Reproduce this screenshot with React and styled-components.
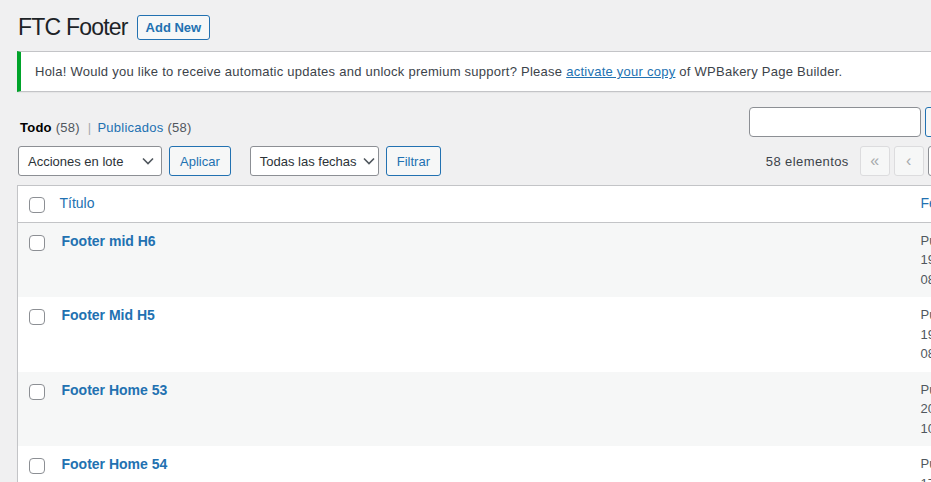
import styled, { createGlobalStyle } from "styled-components"

const GlobalStyle = createGlobalStyle`
    html, body {
        margin: 0;
        padding: 0;
        background: #f0f0f1;
        overflow: hidden;
    }
    body {
        font-family: "Liberation Sans", Arial, sans-serif;
        font-size: 13px;
        color: #3c434a;
    }
`

const rows = [
    { title: 'Footer mid H6', date: ['Publicada', '19/05/2023 a las', '08:45'] },
    { title: 'Footer Mid H5', date: ['Publicada', '19/05/2023 a las', '08:41'] },
    { title: 'Footer Home 53', date: ['Publicada', '20/04/2023 a las', '10:12'] },
    { title: 'Footer Home 54', date: ['Publicada', '17/04/2023 a las', '09:30'] },
]

function Chevron() {
    return (
        <svg width="12" height="8" viewBox="0 0 12 8">
            <polyline points="1,1.5 6,6.5 11,1.5" fill="none" stroke="#50575e" strokeWidth="1.6" />
        </svg>
    )
}

export default function App() {
    return (
        <>
            <GlobalStyle />
            <Wrap>
                <Header>
                    <Title>FTC Footer</Title>
                    <AddNew>Add New</AddNew>
                </Header>

                <Notice>
                    Hola! Would you like to receive automatic updates and unlock premium support? Please&nbsp;
                    <a href="#">activate your copy</a>&nbsp;of WPBakery Page Builder.
                </Notice>

                <SearchRow>
                    <SubSub>
                        <Current>Todo</Current> <Count>(58)</Count>
                        <Sep>|</Sep>
                        <a href="#">Publicados</a> <Count>(58)</Count>
                    </SubSub>
                    <SearchBox>
                        <SearchInput type="search" />
                        <SearchButton>Buscar entradas</SearchButton>
                    </SearchBox>
                </SearchRow>

                <TableNav>
                    <Actions>
                        <FakeSelect $width="144px">
                            <span>Acciones en lote</span>
                            <Chevron />
                        </FakeSelect>
                        <OutlineButton>Aplicar</OutlineButton>
                    </Actions>
                    <Actions>
                        <FakeSelect $width="129px">
                            <span>Todas las fechas</span>
                            <Chevron />
                        </FakeSelect>
                        <OutlineButton>Filtrar</OutlineButton>
                    </Actions>
                    <Pages>
                        <ItemCount>58 elementos</ItemCount>
                        <PageButton $disabled>«</PageButton>
                        <PageButton $disabled>‹</PageButton>
                        <CurrentPage defaultValue="1" />
                        <OfPages>de 3</OfPages>
                        <PageButton>›</PageButton>
                        <PageButton>»</PageButton>
                    </Pages>
                </TableNav>

                <ListTable>
                    <colgroup>
                        <col style={{ width: '32px' }} />
                        <col />
                        <col style={{ width: '159px' }} />
                    </colgroup>
                    <thead>
                        <tr>
                            <HeadCheck><Checkbox /></HeadCheck>
                            <HeadCell><a href="#">Título</a></HeadCell>
                            <HeadCell><a href="#">Fecha</a></HeadCell>
                        </tr>
                    </thead>
                    <tbody>
                        {rows.map((row, i) => (
                            <Row key={i} $striped={i % 2 === 0}>
                                <CheckCell><Checkbox /></CheckCell>
                                <TitleCell><a href="#">{row.title}</a></TitleCell>
                                <DateCell>
                                    {row.date[0]}<br />{row.date[1]}<br />{row.date[2]}
                                </DateCell>
                            </Row>
                        ))}
                    </tbody>
                </ListTable>
            </Wrap>
        </>
    )
}

const Wrap = styled.div`
    width: 1053px;
    margin-left: 17px;
    padding-top: 15px;
    a {
        color: #2271b1;
        text-decoration: none;
    }
`

const Header = styled.div`
    display: flex;
    align-items: center;
    height: 25px;
`

const Title = styled.h1`
    margin: 0 9px 0 1px;
    font-size: 23px;
    line-height: 25px;
    font-weight: 400;
    letter-spacing: -0.8px;
    color: #1d2327;
`

const AddNew = styled.button`
    box-sizing: border-box;
    height: 25px;
    padding: 0 8px;
    border: 1px solid #2271b1;
    border-radius: 3px;
    background: #f6f7f7;
    color: #2271b1;
    font-family: inherit;
    font-size: 13px;
    font-weight: 600;
`

const Notice = styled.div`
    box-sizing: border-box;
    display: flex;
    align-items: center;
    height: 41px;
    margin-top: 11px;
    padding-left: 14px;
    background: #fff;
    border: 1px solid #c3c4c7;
    border-left: 4px solid #00a32a;
    white-space: nowrap;
    letter-spacing: 0.25px;
    box-shadow: 0 1px 1px rgba(0, 0, 0, 0.04);
    a {
        text-decoration: underline;
    }
`

const SearchRow = styled.div`
    display: flex;
    justify-content: space-between;
    align-items: flex-start;
    margin-top: 15px;
`

const SubSub = styled.div`
    margin-top: 13px;
    padding-left: 3px;
    line-height: 16px;
    letter-spacing: 0.25px;
    color: #646970;
`

const Current = styled.span`
    font-weight: 600;
    color: #000;
`

const Count = styled.span`
    color: #50575e;
`

const Sep = styled.span`
    margin: 0 6px 0 8px;
    color: #a7aaad;
`

const SearchBox = styled.div`
    display: flex;
    gap: 4px;
`

const SearchInput = styled.input`
    box-sizing: border-box;
    width: 172px;
    height: 30px;
    border: 1px solid #8c8f94;
    border-radius: 4px;
    background: #fff;
`

const OutlineButton = styled.button`
    box-sizing: border-box;
    height: 30px;
    padding: 0 10px;
    border: 1px solid #2271b1;
    border-radius: 3px;
    background: #f6f7f7;
    color: #2271b1;
    font-family: inherit;
    font-size: 13px;
    white-space: nowrap;
`

const SearchButton = styled(OutlineButton)`
    width: 145px;
`

const TableNav = styled.div`
    display: flex;
    align-items: center;
    height: 30px;
    margin-top: 9px;
    padding-left: 1px;
`

const Actions = styled.div`
    display: flex;
    align-items: center;
    gap: 7px;
    margin-right: 19px;
`

const FakeSelect = styled.div`
    box-sizing: border-box;
    display: flex;
    align-items: center;
    justify-content: space-between;
    width: ${props => props.$width};
    height: 30px;
    padding: 0 7px 0 9px;
    border: 1px solid #8c8f94;
    border-radius: 3px;
    background: #fff;
    color: #2c3338;
    font-size: 13px;
    white-space: nowrap;
    svg {
        flex-shrink: 0;
        margin-left: 6px;
    }
`

const Pages = styled.div`
    display: flex;
    align-items: center;
    gap: 4px;
    margin-left: auto;
`

const ItemCount = styled.span`
    margin-right: 7px;
    letter-spacing: 0.4px;
`

const PageButton = styled.span`
    box-sizing: border-box;
    display: flex;
    align-items: center;
    justify-content: center;
    width: 30px;
    height: 30px;
    border: 1px solid ${props => props.$disabled ? '#dcdcde' : '#2271b1'};
    border-radius: 3px;
    background: #f6f7f7;
    color: ${props => props.$disabled ? '#a7aaad' : '#2271b1'};
    font-size: 16px;
`

const CurrentPage = styled.input`
    box-sizing: border-box;
    width: 33px;
    height: 30px;
    border: 1px solid #8c8f94;
    border-radius: 3px;
    text-align: center;
    font-family: inherit;
    font-size: 13px;
    color: #2c3338;
`

const OfPages = styled.span`
    margin: 0 6px;
`

const ListTable = styled.table`
    width: 100%;
    margin-top: 9px;
    table-layout: fixed;
    border-collapse: collapse;
    border: 1px solid #c3c4c7;
    background: #fff;
    box-shadow: 0 1px 1px rgba(0, 0, 0, 0.04);
`

const HeadCheck = styled.th`
    vertical-align: top;
    padding: 11px 0 0 11px;
    text-align: left;
    border-bottom: 1px solid #c3c4c7;
`

const HeadCell = styled.th`
    padding: 8px 10px;
    text-align: left;
    font-weight: 400;
    font-size: 14px;
    line-height: 19.6px;
    border-bottom: 1px solid #c3c4c7;
`

const Row = styled.tr`
    background: ${props => props.$striped ? '#f6f7f7' : '#fff'};
`

const CheckCell = styled.td`
    vertical-align: top;
    padding: 12px 0 0 11px;
`

const TitleCell = styled.td`
    vertical-align: top;
    padding: 9px 10px 7px 12px;
    font-size: 14px;
    line-height: 19.6px;
    font-weight: 600;
`

const DateCell = styled.td`
    vertical-align: top;
    padding: 8px 10px;
    line-height: 19.5px;
    color: #50575e;
`

const Checkbox = styled.span`
    display: block;
    box-sizing: border-box;
    width: 16px;
    height: 16px;
    border: 1px solid #8c8f94;
    border-radius: 4px;
    background: #fff;
`
